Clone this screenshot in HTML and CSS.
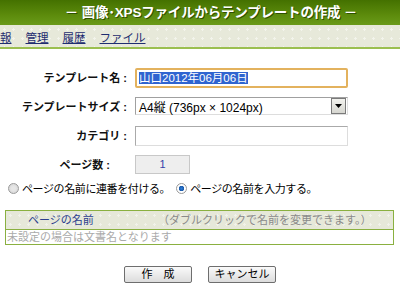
FILE: index.html
```html
<!DOCTYPE html>
<html lang="ja">
<head>
    <meta charset="UTF-8">
    <title>画像・XPSファイルからテンプレートの作成</title>
    <link rel="stylesheet" href="styles.css">
</head>
<body>
    <div class="title-bar">－ 画像･XPSファイルからテンプレートの作成 －</div>
    <div class="nav">
        <a href="#">報</a>
        <a href="#">管理</a>
        <a href="#">履歴</a>
        <a href="#">ファイル</a>
    </div>

    <form class="tpl-form">
        <div class="fields">
            <label class="field-label" for="tpl-name">テンプレート名 :</label>
            <div class="text-input focused" id="tpl-name"><span class="selected">山口2012年06月06日</span></div>

            <label class="field-label" for="tpl-size">テンプレートサイズ :</label>
            <div class="select-box" id="tpl-size">
                <span class="select-text">A4縦 (736px × 1024px)</span>
                <span class="select-arrow">
                    <svg width="7" height="4" viewBox="0 0 7 4"><path d="M0 0h7L3.5 4z" fill="#000"/></svg>
                </span>
            </div>

            <label class="field-label" for="tpl-category">カテゴリ :</label>
            <input type="text" id="tpl-category" class="text-input">

            <label class="field-label short">ページ数 :</label>
            <div class="page-count">1</div>
        </div>

        <div class="radio-row">
            <label class="radio"><span class="radio-mark"></span>ページの名前に連番を付ける。</label>
            <label class="radio"><span class="radio-mark checked"></span>ページの名前を入力する。</label>
        </div>

        <div class="page-table">
            <div class="page-head">
                <span class="head-title">ページの名前</span>
                <span class="head-hint">（ダブルクリックで名前を変更できます。）</span>
            </div>
            <div class="page-row">未設定の場合は文書名となります</div>
        </div>

        <div class="buttons">
            <button type="button" class="btn">作　成</button>
            <button type="button" class="btn">キャンセル</button>
        </div>
    </form>
</body>
</html>
```

FILE: styles.css
```css
body {
    margin: 0;
    font-family: "Liberation Sans", "Noto Sans CJK JP", sans-serif;
    font-size: 11px;
    color: #000;
    background: #fff;
    overflow: hidden;
}

.title-bar {
    height: 25px;
    line-height: 25px;
    padding-left: 22px;
    text-align: center;
    color: #fff;
    font-size: 13.5px;
    font-weight: bold;
    letter-spacing: -0.2px;
    background: linear-gradient(#447100, #5c8b0c 60%, #6a9a1a);
    text-shadow: 1px 1px 0 #2f5000;
}

.nav {
    height: 21px;
    display: flex;
    align-items: center;
    gap: 14px;
    padding-top: 1px;
    background-color: #e7e9da;
    background-image: radial-gradient(circle, #f3f4ec 1px, transparent 1.2px);
    background-size: 9px 9px;
    border-bottom: 2px solid #9bbf50;
}

.nav a {
    color: #1f2d70;
    font-size: 11.5px;
    text-decoration: underline;
}

.tpl-form {
    padding-top: 19px;
}

.fields {
    display: grid;
    grid-template-columns: 127px 213px;
    grid-auto-rows: 20px;
    column-gap: 8px;
    row-gap: 9px;
}

.field-label {
    text-align: right;
    font-weight: bold;
    font-size: 11px;
    line-height: 20px;
    color: #111;
}

.field-label.short {
    padding-right: 17px;
}

.text-input {
    box-sizing: border-box;
    width: 213px;
    height: 20px;
    margin: 0;
    padding: 0 3px;
    border: 1px solid #aaa;
    border-right-color: #ddd;
    border-bottom-color: #ddd;
    font-family: "Liberation Sans", "Noto Sans CJK JP", sans-serif;
    font-size: 12px;
    outline: none;
}

.text-input.focused {
    border: 2px solid #e3b25e;
    border-radius: 2px;
    padding: 0 2px;
    line-height: 16px;
}

.selected {
    color: #fff;
    background: #2f64d0;
    font-size: 11.5px;
}

.select-box {
    box-sizing: border-box;
    height: 18px;
    display: flex;
    align-items: center;
    border: 1px solid #a0a0a0;
    border-right-color: #ddd;
    border-bottom-color: #ddd;
    background: #fff;
}

.select-text {
    flex: 1;
    padding-left: 3px;
    font-size: 12px;
}

.select-arrow {
    width: 13px;
    height: 14px;
    margin-right: 1px;
    display: flex;
    align-items: center;
    justify-content: center;
    border: 1px solid #7a7a7a;
    background: linear-gradient(#f2f2ee, #d6d6d0);
}

.page-count {
    box-sizing: border-box;
    width: 55px;
    height: 19px;
    line-height: 17px;
    text-align: center;
    color: #3342a8;
    background: #eeeeee;
    border: 1px solid #c8c8c8;
}

.radio-row {
    display: flex;
    gap: 6px;
    margin: 6px 0 0 8px;
    height: 14px;
    align-items: center;
}

.radio {
    display: flex;
    align-items: center;
    gap: 3px;
    letter-spacing: -0.4px;
}

.radio-mark {
    box-sizing: border-box;
    width: 11px;
    height: 11px;
    border-radius: 50%;
    border: 1px solid #9a9a9a;
    background: radial-gradient(circle, #e6e6e6 30%, #cfcfcf);
}

.radio-mark.checked {
    background: radial-gradient(circle, #2b7dd8 0, #1a58a8 2.5px, #fff 3px);
}

.page-table {
    margin: 15px 6px 0 5px;
    border: 1px solid #8ab040;
}

.page-head {
    height: 18px;
    line-height: 18px;
    display: flex;
    border-bottom: 1px solid #8ab040;
    background-color: #e6e8d9;
    background-image: radial-gradient(circle, #f1f2ea 1px, transparent 1.2px);
    background-size: 9px 9px;
}

.head-title {
    width: 130px;
    padding-left: 22px;
    color: #2c3d8e;
}

.head-hint {
    color: #8a8a8a;
}

.page-row {
    height: 14px;
    line-height: 14px;
    padding-left: 1px;
    color: #aaaaaa;
}

.buttons {
    display: flex;
    justify-content: center;
    gap: 16px;
    margin-top: 21px;
}

.btn {
    box-sizing: border-box;
    width: 68px;
    height: 17px;
    padding: 0;
    font-family: "Liberation Sans", "Noto Sans CJK JP", sans-serif;
    font-size: 11px;
    line-height: 15px;
    color: #000;
    background: linear-gradient(#fafafa, #dcdcdc);
    border: 1px solid #6e6e6e;
    border-radius: 2px;
}
```
